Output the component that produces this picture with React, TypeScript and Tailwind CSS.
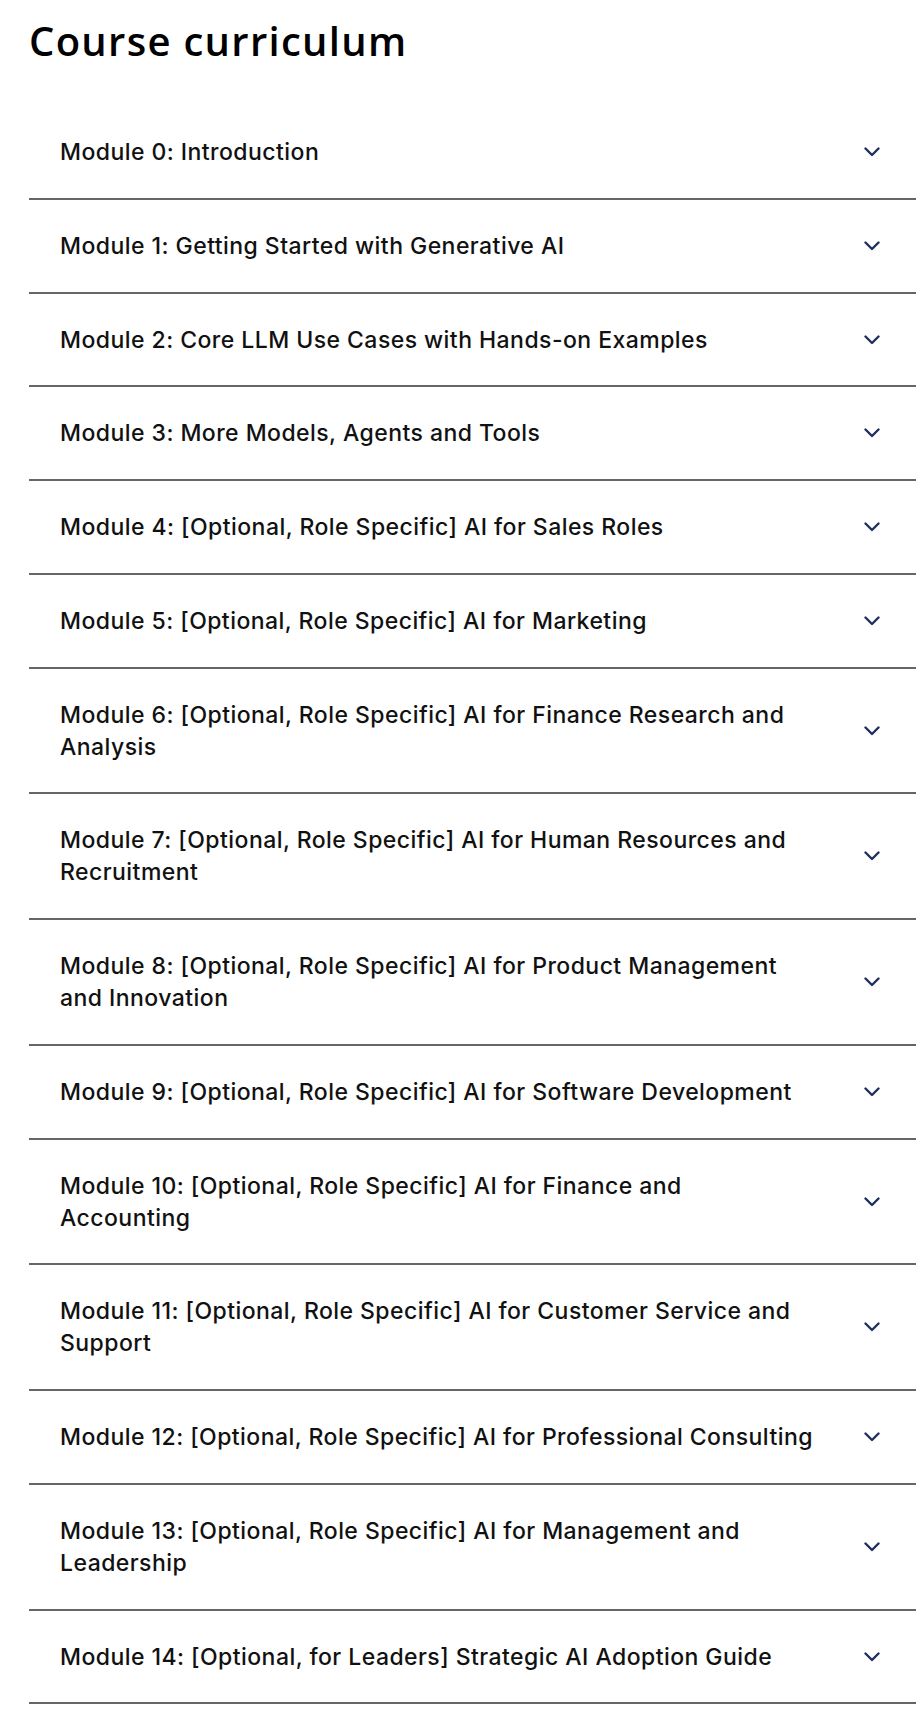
import React from 'react';

const modules = [
  'Module 0: Introduction',
  'Module 1: Getting Started with Generative AI',
  'Module 2: Core LLM Use Cases with Hands-on Examples',
  'Module 3: More Models, Agents and Tools',
  'Module 4: [Optional, Role Specific] AI for Sales Roles',
  'Module 5: [Optional, Role Specific] AI for Marketing',
  'Module 6: [Optional, Role Specific] AI for Finance Research and Analysis',
  'Module 7: [Optional, Role Specific] AI for Human Resources and Recruitment',
  'Module 8: [Optional, Role Specific] AI for Product Management and Innovation',
  'Module 9: [Optional, Role Specific] AI for Software Development',
  'Module 10: [Optional, Role Specific] AI for Finance and Accounting',
  'Module 11: [Optional, Role Specific] AI for Customer Service and Support',
  'Module 12: [Optional, Role Specific] AI for Professional Consulting',
  'Module 13: [Optional, Role Specific] AI for Management and Leadership',
  'Module 14: [Optional, for Leaders] Strategic AI Adoption Guide',
];

const Chevron = () => (
  <svg width="16" height="10" viewBox="0 0 16 10" fill="none" className="shrink-0">
    <polyline
      points="1.5,1.5 8,8 14.5,1.5"
      stroke="#1f2f5e"
      strokeWidth="2.4"
      strokeLinecap="round"
      strokeLinejoin="round"
    />
  </svg>
);

const App: React.FC = () => {
  return (
    <div className="min-h-screen bg-white pl-[29px] pr-[7px]">
      <h1
        className="pt-[17px] text-[40px] leading-[48px] font-semibold tracking-[1.3px] text-black"
        style={{ fontFamily: '"Open Sans", "Liberation Sans", sans-serif' }}
      >
        Course curriculum
      </h1>

      <div className="mt-[41px]" style={{ fontFamily: 'Inter, "Liberation Sans", sans-serif' }}>
        {modules.map((title) => (
          <button
            key={title}
            type="button"
            className="w-full flex items-center justify-between gap-6 pl-[31px] pr-[36px] pt-[30px] pb-[29.75px] border-b-2 border-[#666666] text-left"
          >
            <span className="max-w-[757px] text-[23px] leading-[32px] font-medium tracking-[0.45px] text-[#111111]">
              {title}
            </span>
            <Chevron />
          </button>
        ))}
      </div>
    </div>
  );
};

export default App;
